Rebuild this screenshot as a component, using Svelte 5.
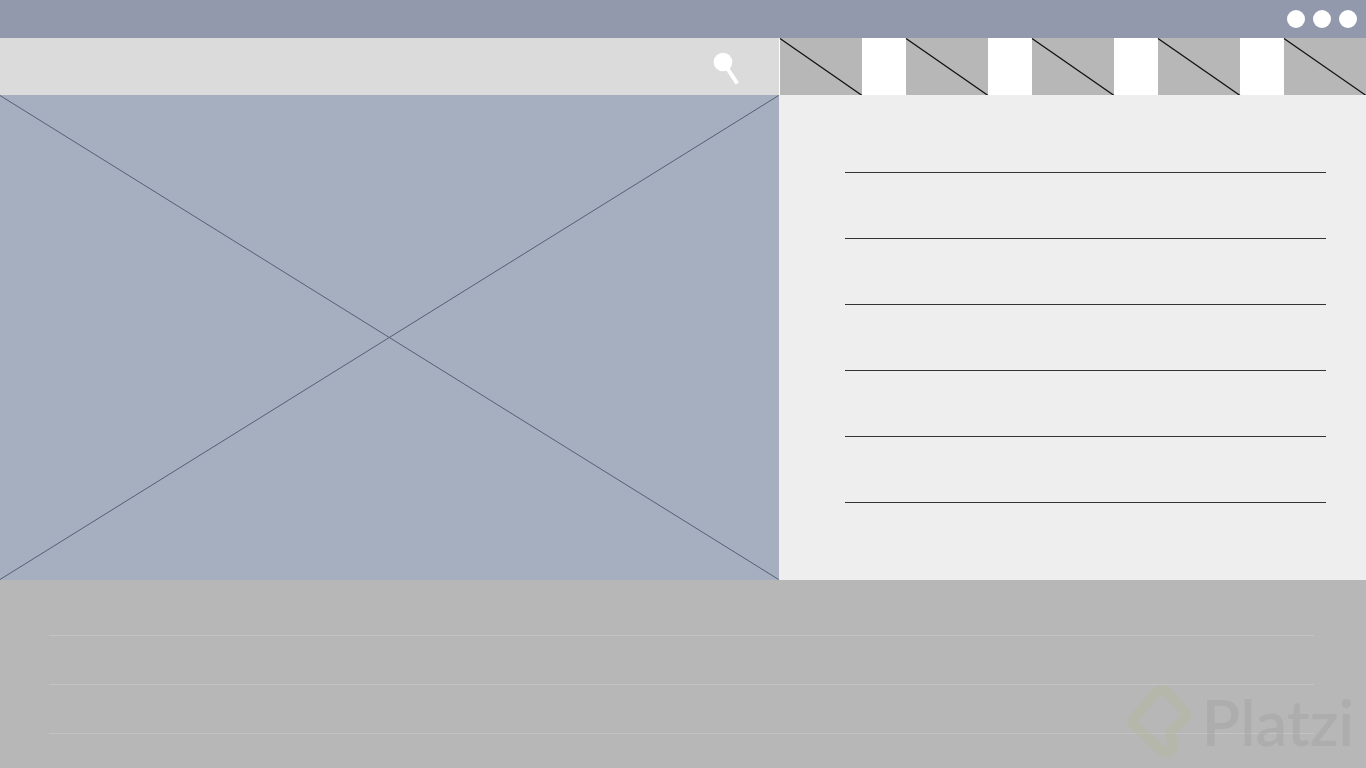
<script lang="ts">
  const dots = [1, 2, 3];
  const tiles = [1, 2, 3, 4, 5];
  const panelRows = [1, 2, 3, 4, 5, 6];
  const footerRows = [1, 2, 3];

  let query = $state('');
</script>

<div class="page">
  <header class="topbar">
    {#each dots as dot (dot)}
      <span class="dot"></span>
    {/each}
  </header>

  <div class="toolbar">
    <form class="search" role="search" onsubmit={(e) => e.preventDefault()}>
      <input type="search" aria-label="Search" bind:value={query} />
      <button type="submit" aria-label="Submit search">
        <svg viewBox="0 0 28 34" width="28" height="34">
          <circle cx="11" cy="11" r="9.3" fill="#fff" />
          <path d="M14 15.5L25.3 32.5" stroke="#fff" stroke-width="4" />
        </svg>
      </button>
    </form>
    <nav class="tiles">
      {#each tiles as tile (tile)}
        <svg class="tile" viewBox="0 0 82 57" preserveAspectRatio="none">
          <path d="M0 0.5L82 57.5" stroke="#111" stroke-width="1.3" />
        </svg>
      {/each}
    </nav>
  </div>

  <main class="content">
    <div class="hero">
      <svg viewBox="0 0 779 485" preserveAspectRatio="none">
        <path d="M0 0.5L779 484.5M0 484.5L779 0.5" stroke="#4d566b" stroke-width="0.9" />
      </svg>
    </div>
    <aside class="panel">
      {#each panelRows as row (row)}
        <hr />
      {/each}
    </aside>
  </main>

  <footer class="footer">
    {#each footerRows as row (row)}
      <hr />
    {/each}
    <div class="brand">
      <svg viewBox="0 0 68 76" width="68" height="76">
        <path
          d="M29 10Q35 3 42 9L58 27Q62 31 58 35L44 49L47 63Q42 71 35 66L9 42Q5 38 9 33Z"
          fill="none"
          stroke="#b1b896"
          stroke-width="10"
          stroke-linejoin="round"
        />
      </svg>
      <span>Platzi</span>
    </div>
  </footer>
</div>

<style>
  :global(body) {
    margin: 0;
  }

  .page {
    display: flex;
    flex-direction: column;
    min-height: 100vh;
    background: #fff;
    font-family: Lato, 'Open Sans', sans-serif;
  }

  .topbar {
    display: flex;
    justify-content: flex-end;
    align-items: center;
    gap: 8px;
    height: 37px;
    padding: 0 9px 1px 0;
    background: #9299ad;
  }

  .dot {
    width: 18px;
    height: 18px;
    border-radius: 50%;
    background: #fff;
  }

  .toolbar,
  .content {
    display: grid;
    grid-template-columns: 57fr 43fr;
  }

  .toolbar {
    height: 57px;
  }

  .search {
    display: flex;
    align-items: center;
    background: #dbdbdb;
  }

  .search input {
    flex: 1;
    min-width: 0;
    height: 100%;
    padding: 0 16px;
    border: 0;
    outline: none;
    background: transparent;
    font: 18px Lato, sans-serif;
  }

  .search button {
    display: flex;
    margin-right: 39px;
    padding: 2px 0 0;
    border: 0;
    background: none;
    cursor: pointer;
  }

  .tiles {
    display: flex;
    justify-content: space-between;
    margin-left: 1px;
  }

  .tile {
    width: 14%;
    height: 100%;
    background: #b7b7b7;
    overflow: visible;
  }

  .hero {
    position: relative;
    background: #a6afc0;
  }

  .hero svg {
    position: absolute;
    inset: 0;
    width: 100%;
    height: 100%;
  }

  .panel {
    display: flex;
    flex-direction: column;
    gap: 65px;
    padding: 77px 40px 77px 66px;
    background: #eee;
  }

  hr {
    width: 100%;
    height: 1px;
    margin: 0;
    border: 0;
    background: #333;
  }

  .footer {
    position: relative;
    display: flex;
    flex: 1;
    flex-direction: column;
    gap: 48px;
    padding: 55px 52px 32px 49px;
    background: #b7b7b7;
  }

  .footer hr {
    background: #c3c3c3;
  }

  .brand {
    position: absolute;
    right: 12px;
    bottom: 8px;
    display: flex;
    align-items: center;
    gap: 8px;
    color: #a0a0a0;
    font-size: 63px;
    font-weight: 600;
    line-height: 76px;
    opacity: 0.4;
  }
</style>
